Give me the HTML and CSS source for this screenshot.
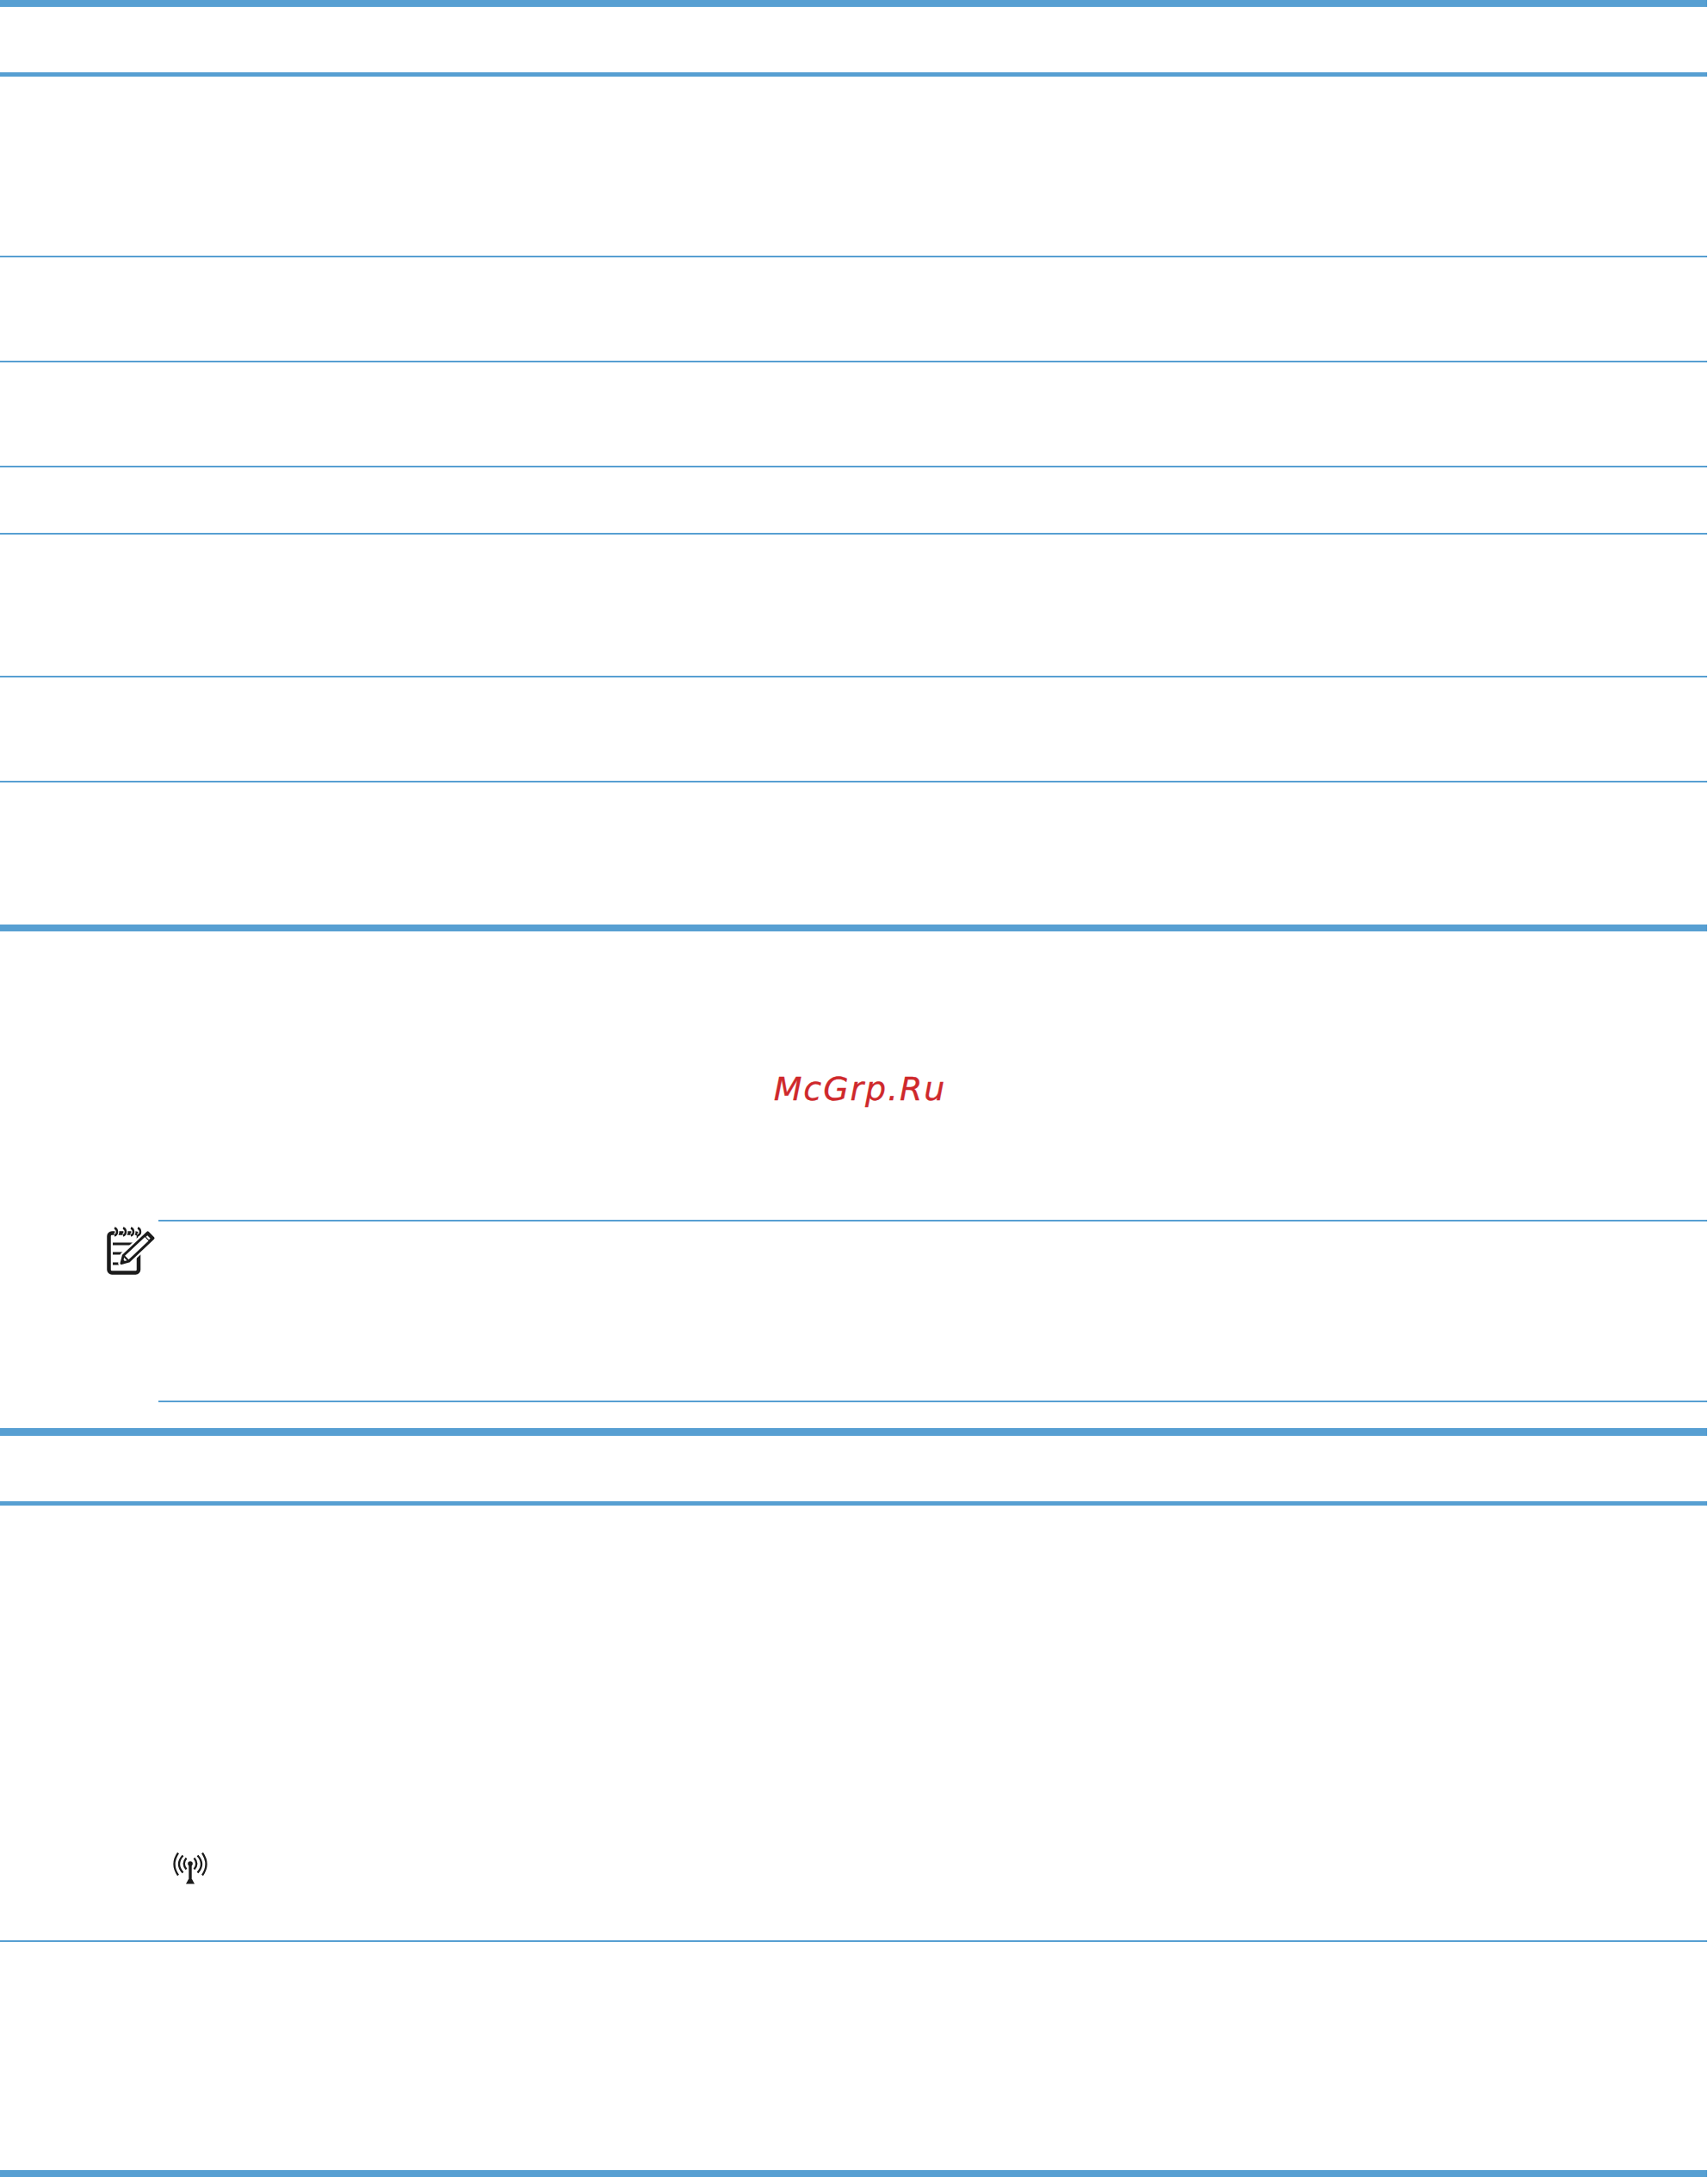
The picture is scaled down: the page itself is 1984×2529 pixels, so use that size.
FILE: index.html
```html
<!DOCTYPE html>
<html lang="en">
<head>
<meta charset="utf-8">
<title>McGrp.Ru</title>
<link rel="stylesheet" href="styles.css">
</head>
<body>
<main class="page">
  <section class="table table-first">
    <div class="head head-first"></div>
    <div class="row h-208"></div>
    <div class="row h-122"></div>
    <div class="row h-122"></div>
    <div class="row h-78"></div>
    <div class="row h-166"></div>
    <div class="row h-122"></div>
    <div class="row-last h-164"></div>
  </section>
  <div class="watermark"><span class="mark-text">McGrp.Ru</span></div>
  <section class="note">
    <div class="note-icon">
      <svg class="pad" viewBox="0 0 60 58" width="60" height="58" aria-hidden="true">
        <path d="M6 7.500a3.500 3.500 0 0 0-3.500 3.500V50a3.500 3.500 0 0 0 3.500 3.500H33.500a3.500 3.500 0 0 0 3.500-3.500V11a3.500 3.500 0 0 0-3.500-3.500z" fill="#fff" stroke="#1b1b1b" stroke-width="4.500"/>
        <path d="M9 1.500q3 1 3 4.500t-3 4.500M19 1.500q3 1 3 4.500t-3 4.500M28 1.500q3 1 3 4.500t-3 4.500M36 1.500q3 1 3 4.500t-3 4.500" fill="none" stroke="#fff" stroke-width="5"/>
        <path d="M9 1.500q3 1 3 4.500t-3 4.500M19 1.500q3 1 3 4.500t-3 4.500M28 1.500q3 1 3 4.500t-3 4.500M36 1.500q3 1 3 4.500t-3 4.500" fill="none" stroke="#1b1b1b" stroke-width="2.400"/>
        <path d="M7 20h26M7 31h19M7 43h9" fill="none" stroke="#1b1b1b" stroke-width="3"/>
        <path d="M17 42.500 19.300 33.500 47.600 6.800 54 13.400 25.700 40.100z" fill="#fff" stroke="#fff" stroke-width="7.500" stroke-linejoin="round"/>
        <path d="M17 42.500 19.300 33.500 47.600 6.800 54 13.400 25.700 40.100z" fill="#fff" stroke="#1b1b1b" stroke-width="3" stroke-linejoin="round"/>
        <path d="M19.300 33.500 25.700 40.100" fill="none" stroke="#1b1b1b" stroke-width="2.200"/>
        <path d="M17 42.500 18.200 37.300 22.400 41.500z" fill="#1b1b1b"/>
        <path d="M43.200 10.900 49.600 17.500 54 13.400 47.600 6.800z" fill="#1b1b1b"/>
        <path d="M46.400 11 49.800 14.500" fill="none" stroke="#fff" stroke-width="2.400"/>
      </svg>
    </div>
    <div class="note-body"></div>
  </section>
  <section class="table table-second">
    <div class="head head-second"></div>
    <div class="row h-506">
      <svg class="antenna" viewBox="0 0 40 38" width="40" height="38" aria-hidden="true">
        <path d="M20 13V33" fill="none" stroke="#1b1b1b" stroke-width="3.400"/>
        <circle cx="20" cy="13" r="2.800" fill="#1b1b1b"/>
        <path d="M18 31h4l3 5.500H15z" fill="#1b1b1b"/>
        <path d="M6 .5Q-3 13.500 6 26.500M11.500 3.500Q2.500 13.500 11.500 23.500M15.500 6.500Q10 13 15.500 19.500M34 .5Q43 13.500 34 26.500M28.500 3.500Q37.500 13.500 28.500 23.500M24.500 6.500Q30 13 24.500 19.500" fill="none" stroke="#1b1b1b" stroke-width="2.300"/>
      </svg>
    </div>
    <div class="row-last h-264"></div>
  </section>
</main>
</body>
</html>
```
FILE: styles.css
```css
html, body {
  margin: 0;
  padding: 0;
  background: #fff;
}
.page {
  width: 1983px;
  height: 2529px;
  overflow: hidden;
}
.table { display: flex; flex-direction: column; }
.table-first { border-top: 8px solid #579fd2; }
.table-second { border-top: 9px solid #579fd2; margin-top: 30px; }
.head { box-sizing: border-box; border-bottom: 5px solid #579fd2; }
.head-first { height: 81px; }
.head-second { height: 81px; }
.row { box-sizing: border-box; border-bottom: 2px solid #579fd2; }
.row-last { box-sizing: border-box; border-bottom: 8px solid #579fd2; }
.table-second .row-last { border-bottom-width: 9px; }
.h-208 { height: 210px; }
.h-122 { height: 122px; }
.h-78 { height: 78px; }
.h-166 { height: 166px; }
.h-164 { height: 173px; }
.h-506 { height: 507px; padding: 403px 0 0 201px; }
.h-264 { height: 274px; }
.watermark {
  height: 335px;
  display: flex;
  justify-content: center;
  padding-left: 15px;
  padding-top: 161px;
  box-sizing: border-box;
}
.mark-text {
  font-family: "DejaVu Sans", sans-serif;
  font-style: italic;
  font-size: 38px;
  line-height: 44px;
  letter-spacing: 1.900px;
  color: #cf282b;
  -webkit-text-stroke: 0.3px #cf282b;
}
.note {
  display: flex;
  height: 212px;
}
.note-icon {
  box-sizing: border-box;
  width: 184px;
  padding: 8px 0 0 124px;
}
.pad { display: block; }
.note-body {
  flex: 1;
  box-sizing: border-box;
  border-top: 2px solid #579fd2;
  border-bottom: 2px solid #579fd2;
}
.antenna { display: block; }
```
